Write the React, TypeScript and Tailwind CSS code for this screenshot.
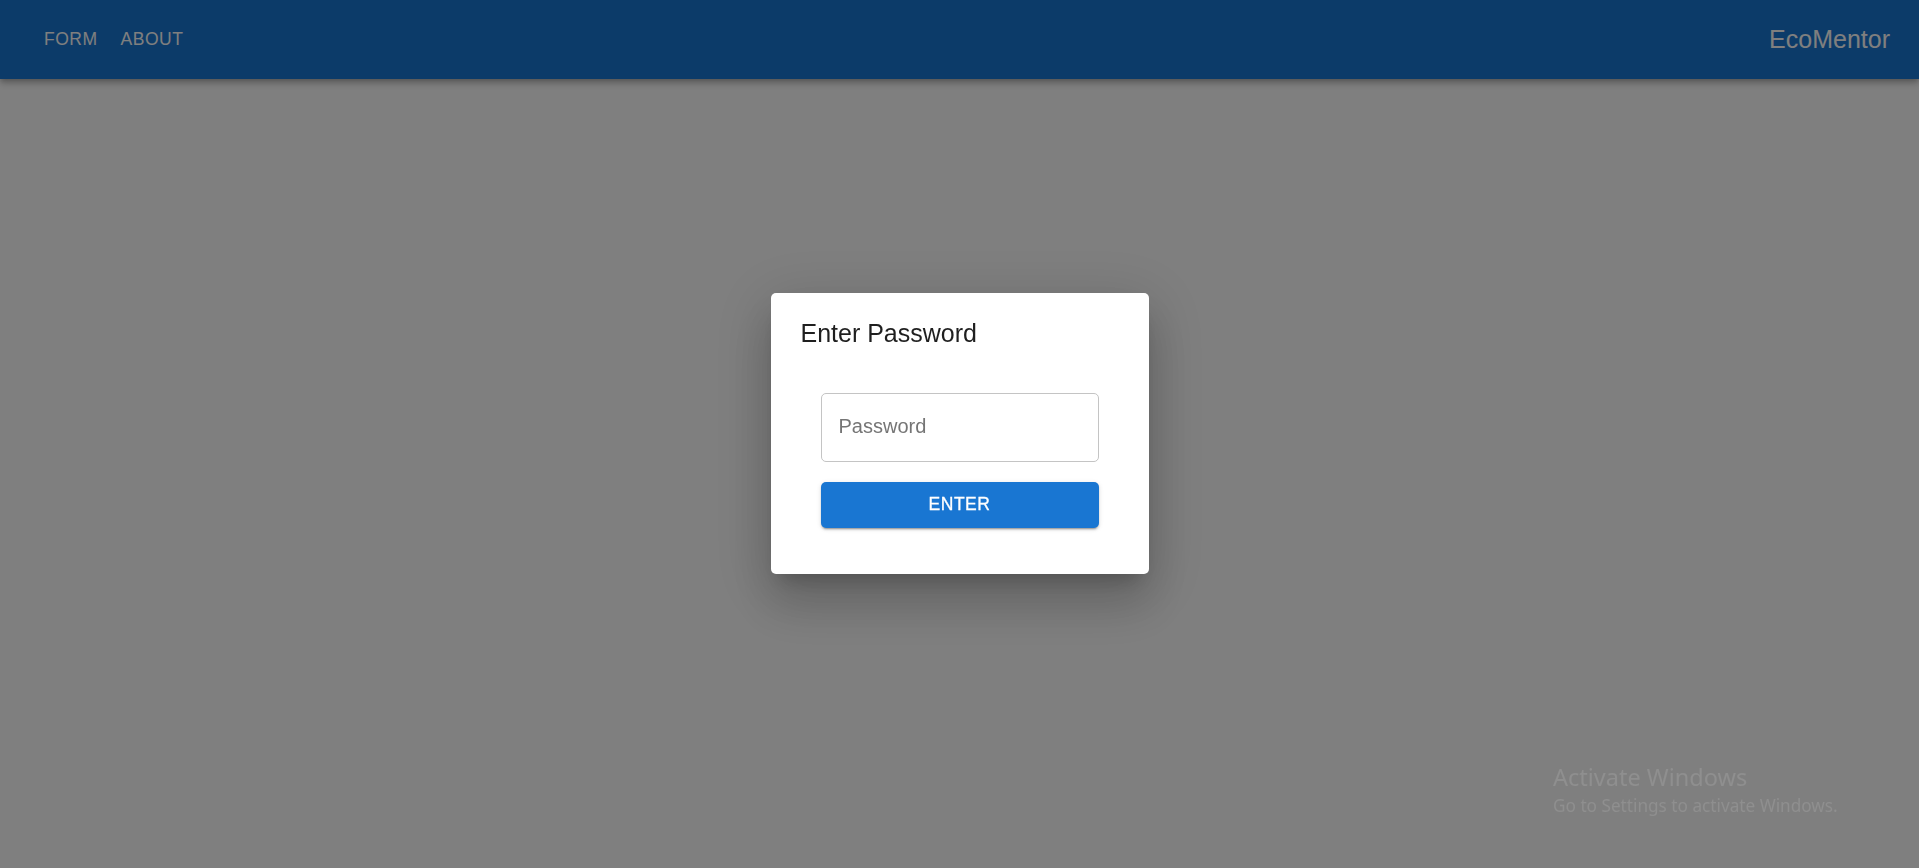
import { useState } from "react";

export default function App() {
  const [password, setPassword] = useState("");

  const navLinks = [
    { name: "FORM", href: "#form" },
    { name: "ABOUT", href: "#about" },
  ];

  return (
    <div className="h-screen overflow-hidden bg-white font-['Liberation_Sans',Arial,sans-serif]">
      {/* App bar */}
      <header className="h-[79px] pb-[2px] bg-[#1976d2] text-white flex items-center justify-between pl-[34px] pr-[29px] shadow-[0_2px_5px_-1px_rgba(0,0,0,0.2),0_5px_6px_0_rgba(0,0,0,0.14),0_1px_12px_0_rgba(0,0,0,0.12)]">
        <nav className="flex items-center gap-[3px]">
          {navLinks.map((link) => (
            <a
              key={link.name}
              href={link.href}
              className="px-[10px] py-[7px] text-[17.5px] font-medium tracking-[0.5px] uppercase leading-[30px] rounded"
            >
              {link.name}
            </a>
          ))}
        </nav>
        <span className="text-[25px] leading-[40px]">EcoMentor</span>
      </header>

      {/* Modal backdrop + dialog */}
      <div className="fixed inset-0 bg-black/50 flex items-center justify-center pb-[2px]">
        <div className="w-[378px] h-[281px] bg-white rounded-[5px] shadow-[0_14px_19px_-9px_rgba(0,0,0,0.2),0_30px_48px_4px_rgba(0,0,0,0.14),0_11px_58px_10px_rgba(0,0,0,0.12)]">
          <h2 className="px-[30px] pt-[20px] text-[25px] leading-[40px] text-[#1f1f1f]">
            Enter Password
          </h2>
          <form
            className="flex flex-col gap-[20px] px-[50px] pt-[40px]"
            onSubmit={(e) => e.preventDefault()}
          >
            <input
              type="password"
              placeholder="Password"
              value={password}
              onChange={(e) => setPassword(e.target.value)}
              className="h-[69px] w-full border border-[#c4c4c4] rounded-[5px] px-[17px] pb-[2px] text-[20px] text-[#222] placeholder:text-[#757575] outline-none"
            />
            <button
              type="submit"
              className="h-[46px] w-full bg-[#1976d2] text-white rounded-[5px] text-[17.5px] font-medium tracking-[0.5px] uppercase [-webkit-text-stroke:0.3px_white] shadow-[0_3px_1px_-2px_rgba(0,0,0,0.2),0_2px_2px_0_rgba(0,0,0,0.14),0_1px_5px_0_rgba(0,0,0,0.12)]"
            >
              Enter
            </button>
          </form>
        </div>
      </div>

      {/* Windows watermark */}
      <div className="fixed left-[1553px] top-[762px] text-[#8f8f8f] font-['Noto_Sans',sans-serif] pointer-events-none">
        <div className="text-[23.5px] leading-[30px]">Activate Windows</div>
        <div className="text-[17.2px] leading-[24px] mt-[2px]">Go to Settings to activate Windows.</div>
      </div>
    </div>
  );
}
